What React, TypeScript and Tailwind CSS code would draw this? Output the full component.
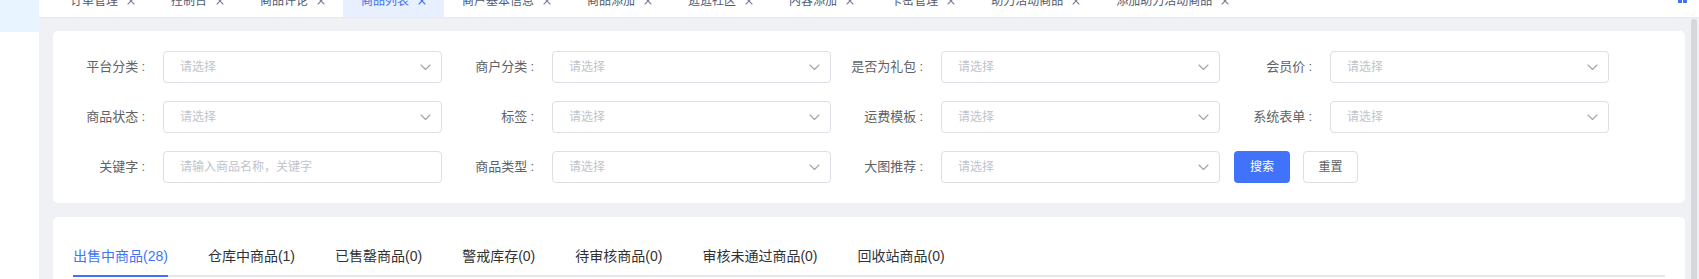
import React from 'react';

const topTabs = [
    '订单管理',
    '控制台',
    '商品评论',
    '商品列表',
    '商户基本信息',
    '商品添加',
    '逛逛社区',
    '内容添加',
    '卡密管理',
    '助力活动商品',
    '添加助力活动商品',
];

const statusTabs = [
    '出售中商品(28)',
    '仓库中商品(1)',
    '已售罄商品(0)',
    '警戒库存(0)',
    '待审核商品(0)',
    '审核未通过商品(0)',
    '回收站商品(0)',
];

type Field = { label: string; kind: 'select' | 'input' | 'buttons'; placeholder?: string };

const rows: Field[][] = [
    [
        { label: '平台分类', kind: 'select' },
        { label: '商户分类', kind: 'select' },
        { label: '是否为礼包', kind: 'select' },
        { label: '会员价', kind: 'select' },
    ],
    [
        { label: '商品状态', kind: 'select' },
        { label: '标签', kind: 'select' },
        { label: '运费模板', kind: 'select' },
        { label: '系统表单', kind: 'select' },
    ],
    [
        { label: '关键字', kind: 'input', placeholder: '请输入商品名称，关键字' },
        { label: '商品类型', kind: 'select' },
        { label: '大图推荐', kind: 'select' },
        { label: '', kind: 'buttons' },
    ],
];

function CloseIcon({ color }: { color: string }) {
    return (
        <svg width="8" height="8" viewBox="0 0 8 8" className="shrink-0">
            <path d="M1 1L7 7M7 1L1 7" stroke={color} strokeWidth="1.1" strokeLinecap="round" />
        </svg>
    );
}

function Chevron() {
    return (
        <svg width="11" height="7" viewBox="0 0 11 7" className="shrink-0">
            <path d="M1 1L5.5 5.5L10 1" fill="none" stroke="#9ea3ad" strokeWidth="1.1" strokeLinecap="round" strokeLinejoin="round" />
        </svg>
    );
}

function FormItem({ field }: { field: Field }) {
    if (field.kind === 'buttons') {
        return (
            <div className="-ml-[6px] flex items-center gap-[13px]">
                <button className="h-[32px] w-[56px] rounded-[4px] bg-[#4073fa] text-[12px] text-white">搜索</button>
                <button className="h-[32px] w-[55px] rounded-[4px] border border-[#dcdfe6] bg-white text-[12px] text-[#606266]">
                    重置
                </button>
            </div>
        );
    }
    return (
        <div className="flex w-[389px] items-center">
            <label className="w-[90px] shrink-0 pr-[18px] text-right text-[13px] text-[#606266]">
                {field.label}
                <span className="ml-[3px]">:</span>
            </label>
            <div className="flex h-[32px] w-[279px] items-center justify-between rounded-[4px] border border-[#dcdfe6] bg-white pl-[16px] pr-[10px]">
                <span className="text-[12px] text-[#c0c4cc]">{field.placeholder ?? '请选择'}</span>
                {field.kind === 'select' && <Chevron />}
            </div>
        </div>
    );
}

export default function App() {
    return (
        <div className="relative flex h-[279px] w-full overflow-hidden bg-[#f0f1f5] font-['Liberation_Sans','Noto_Sans_CJK_SC',sans-serif]">
            {/* Sidebar */}
            <aside className="w-[39px] shrink-0 bg-white">
                <div className="h-[32px] bg-[#e8f4ff]" />
            </aside>

            <div className="flex min-w-0 flex-1 flex-col">
                {/* Top tab bar */}
                <div className="h-[17px] shrink-0 overflow-hidden bg-white shadow-[0_1px_2px_rgba(0,0,0,0.04)]">
                    <div className="-mt-[16px] flex h-[34px] items-center pl-[13px]">
                        {topTabs.map((tab) => {
                            const isActive = tab === '商品列表';
                            return (
                                <div
                                    key={tab}
                                    className={
                                        isActive
                                            ? 'flex h-[34px] items-center rounded-t-[10px] bg-[#e8effe] px-[18px] text-[12px] text-[#4073fa]'
                                            : 'flex h-[34px] items-center px-[18px] text-[12px] text-[#515a6e]'
                                    }
                                >
                                    <span className="whitespace-nowrap">{tab}</span>
                                    <span className="ml-[9px] flex items-center">
                                        <CloseIcon color={isActive ? '#4073fa' : '#7d8596'} />
                                    </span>
                                </div>
                            );
                        })}
                        <div className="-mt-[5px] ml-auto mr-[12px] grid grid-cols-2 gap-[1px]">
                            <span className="h-[4px] w-[4px] bg-[#4073fa]" />
                            <span className="h-[4px] w-[4px] bg-[#4073fa]" />
                            <span className="h-[4px] w-[4px] bg-[#4073fa]" />
                            <span className="h-[4px] w-[4px] bg-[#4073fa]" />
                        </div>
                    </div>
                </div>

                {/* Content */}
                <main className="flex flex-col gap-[14px] px-[14px] pt-[14px]">
                    <section className="flex flex-col gap-[18px] rounded-[5px] bg-white px-[20px] py-[20px]">
                        {rows.map((row, i) => (
                            <div key={i} className="flex items-center">
                                {row.map((field, j) => (
                                    <FormItem key={j} field={field} />
                                ))}
                            </div>
                        ))}
                    </section>

                    <section className="h-[120px] rounded-[5px] bg-white px-[20px] pt-[20px]">
                        <div className="flex h-[40px] border-b-2 border-[#e4e7ed]">
                            {statusTabs.map((tab, i) =>
                                i === 0 ? (
                                    <div key={tab} className="-mb-[2px] flex h-[40px] pr-[20px]">
                                        <span className="flex h-[40px] items-center border-b-2 border-[#4073fa] text-[14px] text-[#4073fa]">
                                            {tab}
                                        </span>
                                    </div>
                                ) : (
                                    <div key={tab} className="flex h-[38px] items-center px-[20px] text-[14px] text-[#303133]">
                                        {tab}
                                    </div>
                                ),
                            )}
                        </div>
                    </section>
                </main>
            </div>

            {/* Scrollbar thumb */}
            <div className="absolute bottom-0 right-[2px] top-[19px] w-[6px] rounded-t-full bg-[#d6d7db]" />
        </div>
    );
}
